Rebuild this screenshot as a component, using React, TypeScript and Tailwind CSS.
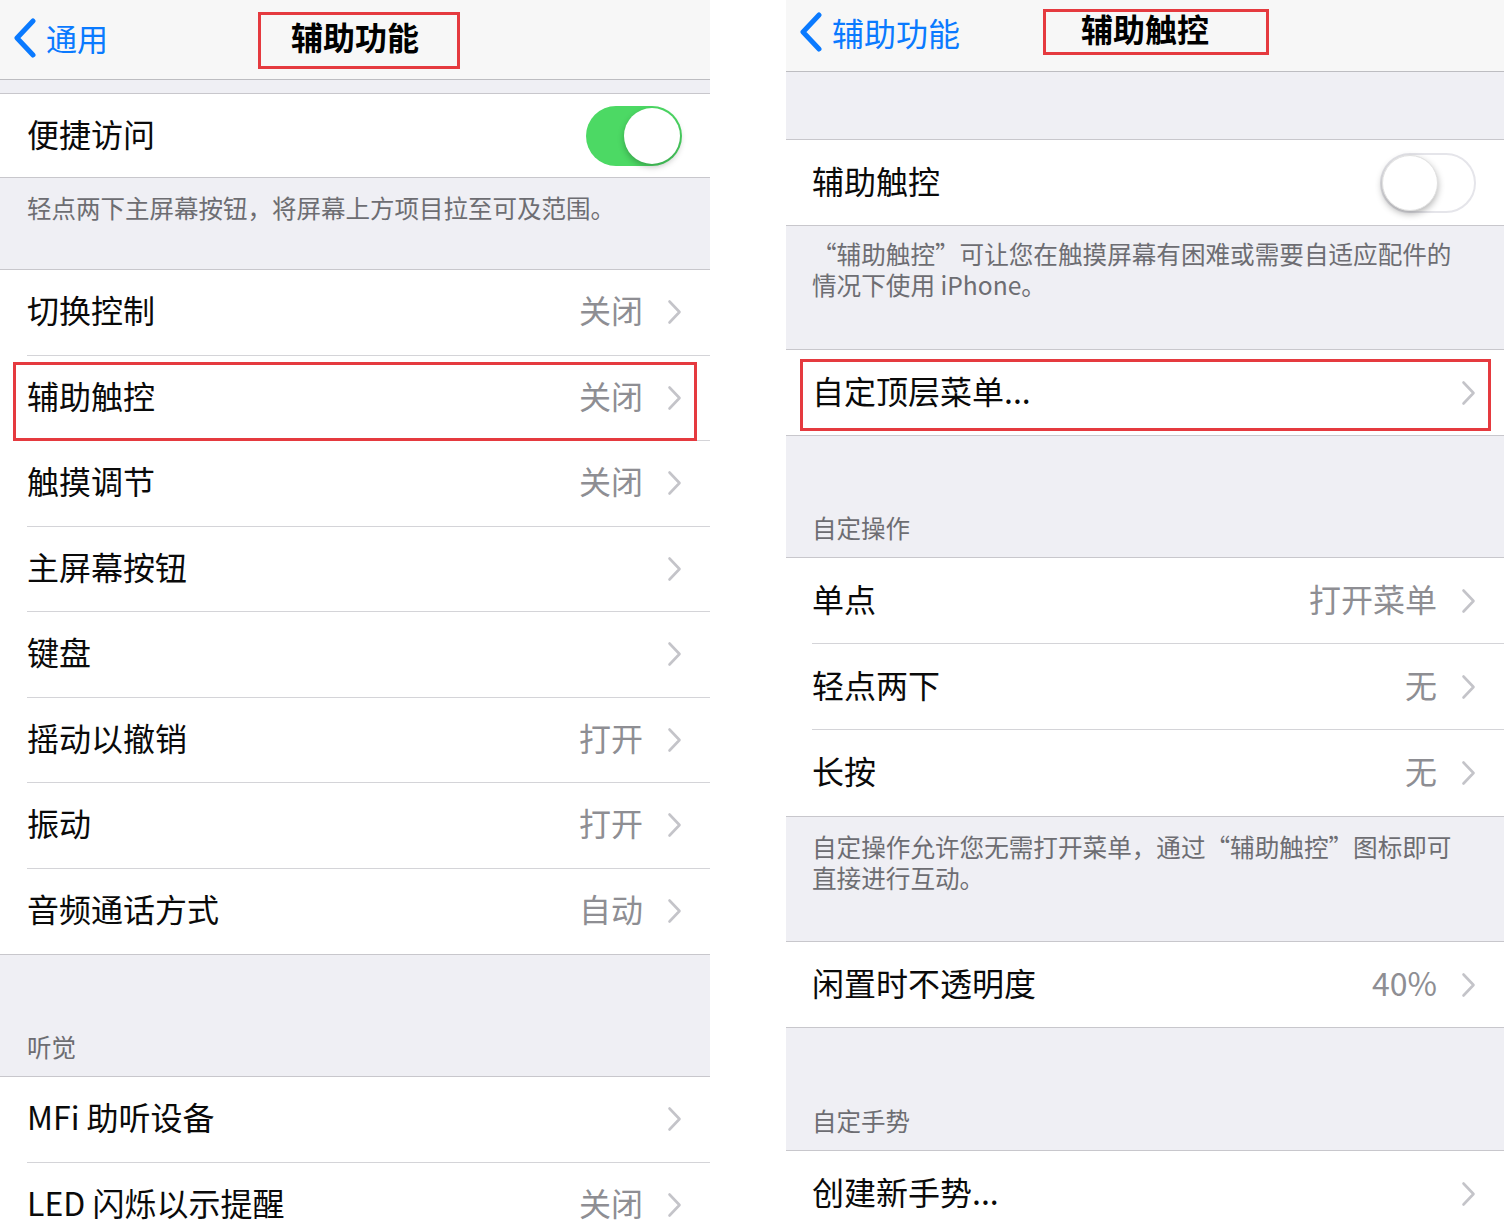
import React from "react";

const FONT = "font-['Noto_Sans_CJK_SC','Noto_Sans',sans-serif]";

function Chevron() {
  return (
    <svg width="15" height="26" viewBox="0 0 15 26" fill="none" className="shrink-0">
      <path d="M2.5 2.5L12.5 13L2.5 23.5" stroke="#c4c4c9" strokeWidth="2.6" strokeLinecap="round" strokeLinejoin="round" />
    </svg>
  );
}

function BackChevron() {
  return (
    <svg width="26" height="40" viewBox="0 0 26 40" fill="none" className="shrink-0">
      <path d="M21 3L5 20L21 37" stroke="#0a7aff" strokeWidth="5" strokeLinecap="round" strokeLinejoin="round" />
    </svg>
  );
}

function Toggle({ on }: { on: boolean }) {
  if (on) {
    return (
      <div className="w-[96px] h-[60px] rounded-full bg-[#4cd964] flex items-center justify-end p-[2px]">
        <div className="w-[56px] h-[56px] rounded-full bg-white shadow-[0_3px_6px_rgba(0,0,0,0.25)]" />
      </div>
    );
  }
  return (
    <div className="w-[96px] h-[60px] rounded-full bg-white border-[2px] border-[#e5e5ea] flex items-center justify-start">
      <div className="w-[56px] h-[56px] rounded-full bg-white shadow-[0_3px_7px_rgba(0,0,0,0.3)] border border-[#e0e0e0]" />
    </div>
  );
}

interface RowProps {
  label: string;
  value?: string;
  chevron?: boolean;
  last?: boolean;
  h: string;
  pl: string;
  toggle?: boolean;
  toggleOn?: boolean;
  highlight?: string;
}

function Row({ label, value, chevron = true, last, h, pl, toggle, toggleOn, highlight }: RowProps) {
  return (
    <div className={`relative bg-white ${pl}`}>
      <div className={`${h} flex items-center pr-[28px] ${last ? "" : "border-b border-[#d4d4d8]"}`}>
        <span className="flex-1 text-[32px] text-[#0a0a0a] leading-none mb-[6px]">{label}</span>
        {value && <span className="text-[32px] text-[#8e8e93] leading-none mr-[24px] mb-[6px]">{value}</span>}
        {toggle ? <Toggle on={!!toggleOn} /> : chevron && <Chevron />}
      </div>
      {highlight && <div className={`absolute border-[3px] border-[#e53a3f] ${highlight}`} />}
    </div>
  );
}

function Header({ text, h, pl }: { text: string; h: string; pl: string }) {
  return (
    <div className={`${h} flex items-end pb-[17px] ${pl} border-b border-[#c8c7cc]`}>
      <span className="text-[24.5px] text-[#6d6d72] leading-none">{text}</span>
    </div>
  );
}

function LeftPanel() {
  const rows: [string, string?][] = [
    ["切换控制", "关闭"],
    ["辅助触控", "关闭"],
    ["触摸调节", "关闭"],
    ["主屏幕按钮"],
    ["键盘"],
    ["摇动以撤销", "打开"],
    ["振动", "打开"],
    ["音频通话方式", "自动"],
  ];
  return (
    <div className="w-[710px] shrink-0 bg-[#efeff4] h-full overflow-hidden">
      {/* nav */}
      <div className="relative h-[80px] bg-[#f7f7f7] border-b border-[#bdbdc1] grid grid-cols-[1fr_auto_1fr] items-center">
        <div className="flex items-center pl-[12px] gap-[8px] pb-[4px]">
          <BackChevron />
          <span className="text-[31px] text-[#0a7aff] leading-none">通用</span>
        </div>
        <span className="text-[32px] font-bold text-black leading-none pb-[8px]">辅助功能</span>
        <div />
        <div className="absolute left-[258px] top-[12px] w-[202px] h-[57px] border-[3px] border-[#e53a3f]" />
      </div>
      <div className="h-[14px] border-b border-[#c8c7cc]" />
      <div className="border-b border-[#c8c7cc]">
        <Row label="便捷访问" toggle toggleOn last h="h-[83px]" pl="pl-[27px]" />
      </div>
      <div className="h-[92px] pt-[15px] px-[27px] border-b border-[#c8c7cc]">
        <p className="text-[24.5px] text-[#6d6d72] leading-[30px]">轻点两下主屏幕按钮，将屏幕上方项目拉至可及范围。</p>
      </div>
      <div className="border-b border-[#c8c7cc]">
        {rows.map(([l, v], i) => (
          <Row
            key={l}
            label={l}
            value={v}
            last={i === rows.length - 1}
            h="h-[85.5px]"
            pl="pl-[27px]"
            highlight={l === "辅助触控" ? "left-[13px] right-[13px] top-[6px] bottom-[0px]" : undefined}
          />
        ))}
      </div>
      <Header text="听觉" h="h-[122px]" pl="pl-[27px]" />
      <div>
        <Row label="MFi 助听设备" h="h-[85.5px]" pl="pl-[27px]" />
        <Row label="LED 闪烁以示提醒" value="关闭" h="h-[85.5px]" pl="pl-[27px]" last />
      </div>
    </div>
  );
}

function RightPanel() {
  const pl = "pl-[26px]";
  return (
    <div className="w-[718px] shrink-0 bg-[#efeff4] h-full overflow-hidden">
      {/* nav */}
      <div className="relative h-[72px] bg-[#f7f7f7] border-b border-[#bdbdc1] grid grid-cols-[1fr_auto_1fr] items-center">
        <div className="flex items-center pl-[12px] gap-[8px] pb-[8px]">
          <BackChevron />
          <span className="text-[32px] text-[#0a7aff] leading-none whitespace-nowrap">辅助功能</span>
        </div>
        <span className="text-[32px] font-bold text-black leading-none pb-[16px]">辅助触控</span>
        <div />
        <div className="absolute left-[257px] top-[9px] w-[226px] h-[46px] border-[3px] border-[#e53a3f]" />
      </div>
      <div className="h-[68px] border-b border-[#c8c7cc]" />
      <div className="border-b border-[#c8c7cc]">
        <Row label="辅助触控" toggle last h="h-[85px]" pl={pl} />
      </div>
      <div className="h-[124px] pt-[12px] pl-[26px] pr-[40px] border-b border-[#c8c7cc]">
        <p className="text-[24.6px] text-[#6d6d72] leading-[31px]">“辅助触控”可让您在触摸屏幕有困难或需要自适应配件的情况下使用 iPhone。</p>
      </div>
      <div className="border-b border-[#c8c7cc]">
        <Row label="自定顶层菜单..." last h="h-[85px]" pl={pl} highlight="left-[14px] right-[13px] top-[9px] bottom-[4px]" />
      </div>
      <Header text="自定操作" h="h-[122px]" pl={pl} />
      <div className="border-b border-[#c8c7cc]">
        <Row label="单点" value="打开菜单" h="h-[86px]" pl={pl} />
        <Row label="轻点两下" value="无" h="h-[86px]" pl={pl} />
        <Row label="长按" value="无" h="h-[86px]" pl={pl} last />
      </div>
      <div className="h-[125px] pt-[14px] pl-[26px] pr-[40px] border-b border-[#c8c7cc]">
        <p className="text-[24.6px] text-[#6d6d72] leading-[31px]">自定操作允许您无需打开菜单，通过“辅助触控”图标即可直接进行互动。</p>
      </div>
      <div className="border-b border-[#c8c7cc]">
        <Row label="闲置时不透明度" value="40%" last h="h-[85px]" pl={pl} />
      </div>
      <Header text="自定手势" h="h-[123px]" pl={pl} />
      <div>
        <Row label="创建新手势..." last h="h-[86px]" pl={pl} />
      </div>
    </div>
  );
}

export default function App() {
  return (
    <div className={`w-[1504px] h-[1226px] bg-white flex overflow-hidden ${FONT}`}>
      <LeftPanel />
      <div className="w-[76px] shrink-0 bg-white" />
      <RightPanel />
    </div>
  );
}
